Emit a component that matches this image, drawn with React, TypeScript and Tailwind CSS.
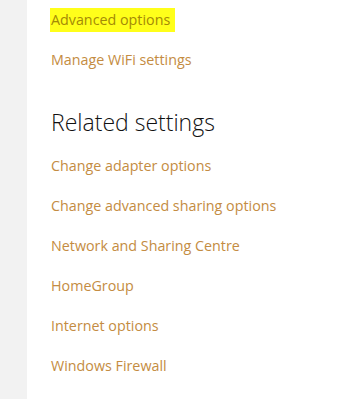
export default function App() {
  const related = [
    "Change adapter options",
    "Change advanced sharing options",
    "Network and Sharing Centre",
    "HomeGroup",
    "Internet options",
    "Windows Firewall",
  ];

  return (
    <div
      className="flex w-[362px] h-[399px] bg-white overflow-hidden"
      style={{ fontFamily: '"Open Sans", "Noto Sans", sans-serif' }}
    >
      <div className="w-[27px] shrink-0 bg-[#f2f2f2]" />
      <div className="flex flex-col pl-[24px] pt-[10px]">
        <div className="flex">
          <span className="bg-[#ffff1a] text-[#a48a06] text-[14.3px] leading-[20px] pr-[5px] -ml-[1px] pl-[1px] py-[2px] -my-[2px]">
            Advanced options
          </span>
        </div>
        <a className="mt-[20px] text-[14.3px] leading-[20px] text-[#c48c42]">Manage WiFi settings</a>
        <h2 className="mt-[38px] text-[23px] leading-[28px] font-light text-[#111]">Related settings</h2>
        <ul className="mt-[20px] flex flex-col gap-[20px]">
          {related.map((item) => (
            <li key={item} className="text-[14.3px] leading-[20px] text-[#c48c42]">
              {item}
            </li>
          ))}
        </ul>
      </div>
    </div>
  );
}
